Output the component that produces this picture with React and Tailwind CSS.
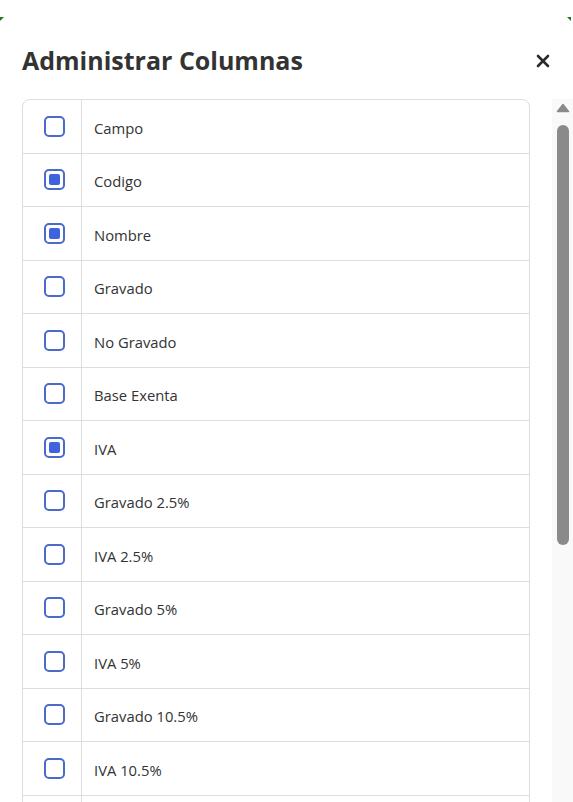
import React, { useState } from 'react'

const COLUMNAS = [
  { label: 'Campo', on: false },
  { label: 'Codigo', on: true },
  { label: 'Nombre', on: true },
  { label: 'Gravado', on: false },
  { label: 'No Gravado', on: false },
  { label: 'Base Exenta', on: false },
  { label: 'IVA', on: true },
  { label: 'Gravado 2.5%', on: false },
  { label: 'IVA 2.5%', on: false },
  { label: 'Gravado 5%', on: false },
  { label: 'IVA 5%', on: false },
  { label: 'Gravado 10.5%', on: false },
  { label: 'IVA 10.5%', on: false },
  { label: 'Gravado 21%', on: false },
  { label: 'IVA 21%', on: false },
  { label: 'Gravado 27%', on: false },
  { label: 'IVA 27%', on: false },
  { label: 'Total', on: true },
]

function Check({ checked, onClick }) {
  return (
    <button
      onClick={onClick}
      className="w-[21px] h-[21px] rounded-[5px] border-2 border-[#4b6bcc] flex items-center justify-center bg-white"
    >
      {checked && <span className="w-[11px] h-[11px] rounded-[2px] bg-[#3f63dc]" />}
    </button>
  )
}

export default function App() {
  const [cols, setCols] = useState(COLUMNAS)

  const toggle = (i) =>
    setCols((prev) => prev.map((c, j) => (j === i ? { ...c, on: !c.on } : c)))

  return (
    <div
      className="relative w-[573px] h-[802px] bg-white flex flex-col overflow-hidden text-[#333]"
      style={{ fontFamily: '"Open Sans", "Noto Sans", sans-serif' }}
    >
      {/* esquinas verdes del fondo */}
      <span className="absolute left-0 top-[17px] w-0 h-0 border-t-[4px] border-t-[#1a7a1a] border-r-[4px] border-r-transparent" />
      <span className="absolute right-[2px] top-[17px] w-0 h-0 border-t-[4px] border-t-[#1a7a1a] border-l-[4px] border-l-transparent" />

      <div className="flex items-center justify-between pl-[22px] pr-[19px] pt-[43px] h-[99px] pb-[20px]">
        <h2 className="text-[25px] font-bold">Administrar Columnas</h2>
        <button className="p-1">
          <svg width="14" height="14" viewBox="0 0 14 14">
            <path d="M2 2 L12 12 M12 2 L2 12" stroke="#2b2b2b" strokeWidth="2.6" strokeLinecap="round" />
          </svg>
        </button>
      </div>

      <div className="flex flex-1 min-h-0">
        <div className="flex-1 overflow-hidden pl-[22px] pr-[22px]">
          <div className="border border-[#dddddd] rounded-[8px]">
            {cols.map((c, i) => (
              <div key={c.label} className="flex h-[53.5px] border-b border-[#dddddd] last:border-b-0">
                <div className="w-[59px] shrink-0 border-r border-[#dddddd] flex items-center pl-[21px]">
                  <Check checked={c.on} onClick={() => toggle(i)} />
                </div>
                <div className="flex items-center pl-[12px] pt-[3px] text-[14.8px]">{c.label}</div>
              </div>
            ))}
          </div>
        </div>

        {/* barra de desplazamiento */}
        <div className="w-[21px] shrink-0 bg-[#f9f9f9] flex flex-col items-center">
          <svg width="14" height="10" viewBox="0 0 14 10" className="mt-[4px]">
            <path d="M7 1.5 L12.5 8.5 L1.5 8.5 Z" fill="#8a8a8a" stroke="#8a8a8a" strokeLinejoin="round" strokeWidth="1.5" />
          </svg>
          <div className="mt-[12px] w-[12px] h-[420px] rounded-full bg-[#8a8a8a]" />
        </div>
      </div>
    </div>
  )
}
